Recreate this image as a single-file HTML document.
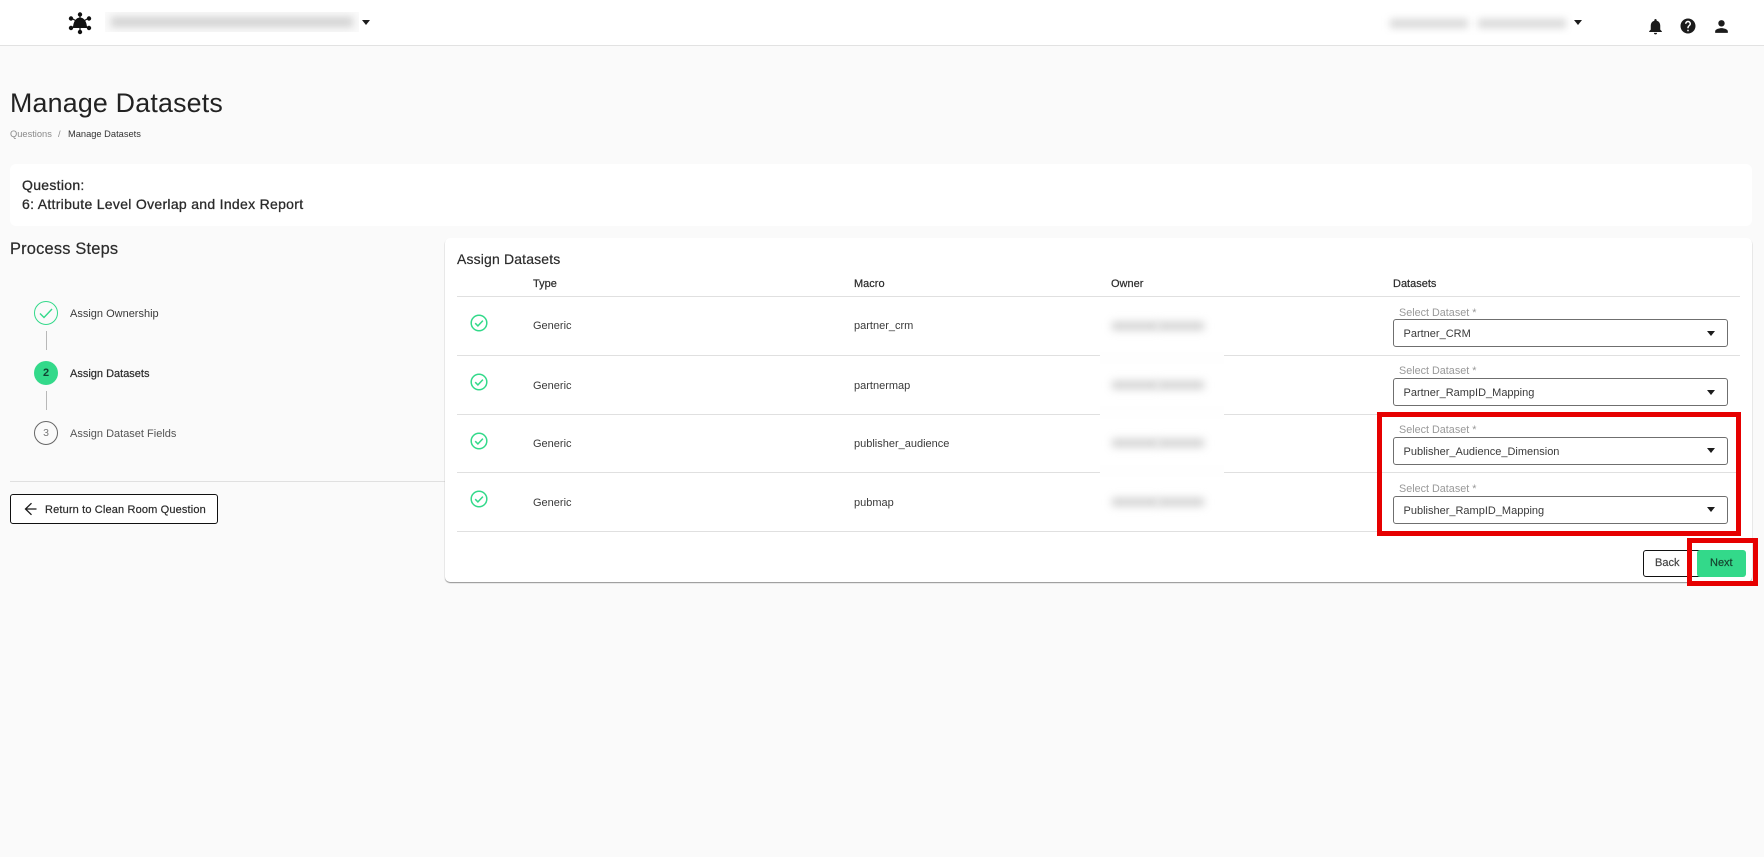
<!DOCTYPE html>
<html lang="en"><head><meta charset="utf-8"><title>Manage Datasets</title>
<style>
html,body{margin:0;padding:0;width:1764px;height:857px;overflow:hidden;background:#fafafa}
body{position:relative;font-family:"Liberation Sans",sans-serif;color:#2d2d2d}
.a{position:absolute}
.t{position:absolute;white-space:nowrap;height:20px;line-height:20px;font-size:11px;letter-spacing:0;color:#3a3a3a}
.rule{position:absolute;height:1px;background:#e0e0e0}
.sel{position:absolute;left:1393px;width:333px;height:26px;border:1px solid #6f6f6f;border-radius:3px;background:#fff}
.car{position:absolute;width:0;height:0;border-left:4.500px solid transparent;border-right:4.500px solid transparent;border-top:5px solid #1c1c1c}
.patch{position:absolute;left:1100px;width:124px;background:#fefefe}
.blur{position:absolute;width:46px;height:8px;background:#cfcfcf;filter:blur(4.200px)}
.lab{color:#999}
.h{color:#2b2b2b;-webkit-text-stroke:.2px #2b2b2b}
svg{position:absolute;overflow:visible}
</style></head>
<body>
<div class="a" style="left:0;top:0;width:1764px;height:45px;background:#fff;border-bottom:1px solid #e2e2e2"></div>
<svg style="left:66px;top:9px" width="28" height="28" viewBox="66 9 28 28">
<g stroke="#111" stroke-width="1.200"><path d="M80 13.500V32M71 18l18 10M89 18L71 28"/></g>
<g fill="#111"><circle cx="80" cy="14.500" r="2.200"/><circle cx="71" cy="18.500" r="2.200"/><circle cx="89" cy="18.500" r="2.200"/><circle cx="71" cy="28" r="2.200"/><circle cx="89" cy="28" r="2.200"/><circle cx="80" cy="32" r="2.200"/>
<path d="M73 28c0-6 3-10.500 7-10.500s7 4.500 7 10.500z"/></g>
</svg>
<div class="a" style="left:105px;top:12px;width:254px;height:20px;background:#fafafa;overflow:hidden"><div class="a" style="left:6px;top:5px;width:242px;height:10px;background:#d2d2d2;filter:blur(4px)"></div></div>
<div class="car" style="left:362px;top:20px"></div>
<div class="a" style="left:1378px;top:11px;width:195px;height:24px;overflow:hidden"><div class="a" style="left:12px;top:8px;width:78px;height:9px;background:#d8d8d8;filter:blur(4px)"></div><div class="a" style="left:100px;top:8px;width:88px;height:9px;background:#d8d8d8;filter:blur(4px)"></div></div>
<div class="car" style="left:1574px;top:20px"></div>
<svg style="left:1645.500px;top:16.500px" width="19" height="19" viewBox="0 0 24 24" fill="#1b1b1b"><path d="M12 22c1.100 0 2-.9 2-2h-4c0 1.100.9 2 2 2zm6-6v-5c0-3.070-1.630-5.640-4.500-6.320V4c0-.83-.67-1.500-1.500-1.500s-1.500.67-1.500 1.500v.68C7.640 5.360 6 7.920 6 11v5l-2 2v1h16v-1l-2-2z"/></svg>
<svg style="left:1679px;top:17px" width="18" height="18" viewBox="0 0 24 24" fill="#1b1b1b"><path d="M12 2C6.480 2 2 6.480 2 12s4.480 10 10 10 10-4.480 10-10S17.520 2 12 2zm1 17h-2v-2h2v2zm2.070-7.750l-.9.92C13.450 12.900 13 13.500 13 15h-2v-.5c0-1.100.45-2.100 1.170-2.830l1.240-1.260c.37-.36.59-.86.59-1.410 0-1.100-.9-2-2-2s-2 .9-2 2H8c0-2.210 1.790-4 4-4s4 1.790 4 4c0 .88-.36 1.680-.93 2.250z"/></svg>
<svg style="left:1712px;top:17px" width="19" height="19" viewBox="0 0 24 24" fill="#1b1b1b"><path d="M12 12c2.210 0 4-1.790 4-4s-1.790-4-4-4-4 1.790-4 4 1.790 4 4 4zm0 2c-2.670 0-8 1.340-8 4v2h16v-2c0-2.660-5.330-4-8-4z"/></svg>

<div class="t" style="left:10px;top:93px;font-size:26.800px;color:#222;letter-spacing:.2px">Manage Datasets</div>
<div class="t" style="left:10px;top:124px;font-size:9.300px;color:#8a8a8a">Questions</div>
<div class="t" style="left:58px;top:124px;font-size:9.300px;color:#8a8a8a">/</div>
<div class="t" style="left:68px;top:124px;font-size:9.300px;color:#333">Manage Datasets</div>

<div class="a" style="left:10px;top:164px;width:1742px;height:62px;background:#fff;border-radius:6px"></div>
<div class="t" style="left:22px;top:175px;font-size:14px;letter-spacing:.3px;color:#2b2b2b;-webkit-text-stroke:.3px #2b2b2b">Question:</div>
<div class="t" style="left:22px;top:194px;font-size:14px;letter-spacing:.3px;color:#2b2b2b;-webkit-text-stroke:.3px #2b2b2b">6: Attribute Level Overlap and Index Report</div>

<div class="t" style="left:10px;top:239px;font-size:16.400px;letter-spacing:.2px;color:#2b2b2b;-webkit-text-stroke:.2px #2b2b2b">Process Steps</div>
<svg style="left:34px;top:301px" width="24" height="24" viewBox="0 0 24 24"><circle cx="12" cy="12" r="11.500" fill="none" stroke="#33d98a" stroke-width="1"/><path d="M6 12.500l4 4 8-8.500" fill="none" stroke="#33d98a" stroke-width="1.400"/></svg>
<div class="t" style="left:70px;top:304px">Assign Ownership</div>
<div class="a" style="left:46px;top:331px;width:1px;height:19px;background:#b8b8b8"></div>
<div class="a" style="left:34px;top:361px;width:24px;height:24px;border-radius:50%;background:#33d98a;text-align:center;line-height:24px;font-size:11px;font-weight:bold;color:#143">2</div>
<div class="t h" style="left:70px;top:364px">Assign Datasets</div>
<div class="a" style="left:46px;top:391px;width:1px;height:19px;background:#b8b8b8"></div>
<div class="a" style="left:34px;top:421px;width:22px;height:22px;border-radius:50%;border:1px solid #666;text-align:center;line-height:22px;font-size:10.500px;color:#777">3</div>
<div class="t" style="left:70px;top:424px;color:#555">Assign Dataset Fields</div>
<div class="rule" style="left:10px;top:481px;width:436px"></div>
<div class="a" style="left:10px;top:494px;width:206px;height:28px;border:1.300px solid #111;border-radius:3px;background:#fff"></div>
<svg style="left:24px;top:501px" width="14" height="16" viewBox="0 0 14 16"><path d="M12.500 8H1.500M7.500 2.200L1.500 8l6 5.800" fill="none" stroke="#1a1a1a" stroke-width="1.300"/></svg>
<div class="t h" style="left:45px;top:500px;letter-spacing:.15px">Return to Clean Room Question</div>

<div class="a" style="left:445px;top:238px;width:1307px;height:344px;background:#fff;border-radius:5px;box-shadow:0 1px 1px #8f8f8f"></div>
<div class="t h" style="left:457px;top:249px;font-size:14px;letter-spacing:.15px">Assign Datasets</div>
<div class="t h" style="left:533px;top:274px">Type</div>
<div class="t h" style="left:854px;top:274px">Macro</div>
<div class="t h" style="left:1111px;top:274px">Owner</div>
<div class="t h" style="left:1393px;top:274px">Datasets</div>

<div class="rule" style="left:457px;top:296px;width:1283px"></div>
<div class="rule" style="left:457px;top:355px;width:1283px"></div>
<div class="rule" style="left:457px;top:414px;width:1283px"></div>
<div class="rule" style="left:457px;top:472px;width:1283px"></div>
<div class="rule" style="left:457px;top:531px;width:1283px"></div>
<div class="patch" style="top:352px;height:12px"></div>
<div class="patch" style="top:406px;height:13px"></div>
<div class="patch" style="top:465px;height:12px"></div>

<svg style="left:470px;top:314px" width="18" height="18" viewBox="0 0 18 18"><circle cx="9" cy="9" r="7.800" fill="none" stroke="#33d98a" stroke-width="1.500"/><path d="M5.200 9.200l2.700 2.700 5-5.300" fill="none" stroke="#33d98a" stroke-width="1.500"/></svg>
<svg style="left:470px;top:373px" width="18" height="18" viewBox="0 0 18 18"><circle cx="9" cy="9" r="7.800" fill="none" stroke="#33d98a" stroke-width="1.500"/><path d="M5.200 9.200l2.700 2.700 5-5.300" fill="none" stroke="#33d98a" stroke-width="1.500"/></svg>
<svg style="left:470px;top:432px" width="18" height="18" viewBox="0 0 18 18"><circle cx="9" cy="9" r="7.800" fill="none" stroke="#33d98a" stroke-width="1.500"/><path d="M5.200 9.200l2.700 2.700 5-5.300" fill="none" stroke="#33d98a" stroke-width="1.500"/></svg>
<svg style="left:470px;top:490px" width="18" height="18" viewBox="0 0 18 18"><circle cx="9" cy="9" r="7.800" fill="none" stroke="#33d98a" stroke-width="1.500"/><path d="M5.200 9.200l2.700 2.700 5-5.300" fill="none" stroke="#33d98a" stroke-width="1.500"/></svg>

<div class="t" style="left:533px;top:316px">Generic</div>
<div class="t" style="left:854px;top:316px">partner_crm</div>
<div class="blur" style="left:1112px;top:322px"></div><div class="blur" style="left:1158px;top:322px"></div>
<div class="t lab" style="left:1399px;top:303px;font-size:10.800px">Select Dataset *</div>
<div class="sel" style="top:319px"></div>
<div class="t" style="left:1403.500px;top:324px">Partner_CRM</div>
<div class="car" style="left:1707px;top:331px"></div>

<div class="t" style="left:533px;top:376px">Generic</div>
<div class="t" style="left:854px;top:376px">partnermap</div>
<div class="blur" style="left:1112px;top:381px"></div><div class="blur" style="left:1158px;top:381px"></div>
<div class="t lab" style="left:1399px;top:361px;font-size:10.800px">Select Dataset *</div>
<div class="sel" style="top:378px"></div>
<div class="t" style="left:1403.500px;top:383px">Partner_RampID_Mapping</div>
<div class="car" style="left:1707px;top:390px"></div>

<div class="t" style="left:533px;top:434px">Generic</div>
<div class="t" style="left:854px;top:434px">publisher_audience</div>
<div class="blur" style="left:1112px;top:439px"></div><div class="blur" style="left:1158px;top:439px"></div>
<div class="t lab" style="left:1399px;top:420px;font-size:10.800px">Select Dataset *</div>
<div class="sel" style="top:437px"></div>
<div class="t" style="left:1403.500px;top:442px">Publisher_Audience_Dimension</div>
<div class="car" style="left:1707px;top:448px"></div>

<div class="t" style="left:533px;top:493px">Generic</div>
<div class="t" style="left:854px;top:493px">pubmap</div>
<div class="blur" style="left:1112px;top:498px"></div><div class="blur" style="left:1158px;top:498px"></div>
<div class="t lab" style="left:1399px;top:479px;font-size:10.800px">Select Dataset *</div>
<div class="sel" style="top:496px"></div>
<div class="t" style="left:1403.500px;top:501px">Publisher_RampID_Mapping</div>
<div class="car" style="left:1707px;top:507px"></div>

<div class="a" style="left:1643px;top:550px;width:60px;height:25px;border:1.300px solid #111;border-radius:3px;background:#fff"></div>
<div class="t h" style="left:1655px;top:553px;color:#444;-webkit-text-stroke:.2px #444">Back</div>
<div class="a" style="left:1697px;top:550px;width:49px;height:27px;background:#33d98a;border-radius:3px"></div>
<div class="t h" style="left:1710px;top:553px;color:#16442f;-webkit-text-stroke:.2px #16442f">Next</div>

<div class="a" style="left:1377px;top:412px;width:354px;height:114px;border:5px solid #e60000"></div>
<div class="a" style="left:1687px;top:538px;width:61px;height:38px;border:5px solid #e60000"></div>
</body></html>
